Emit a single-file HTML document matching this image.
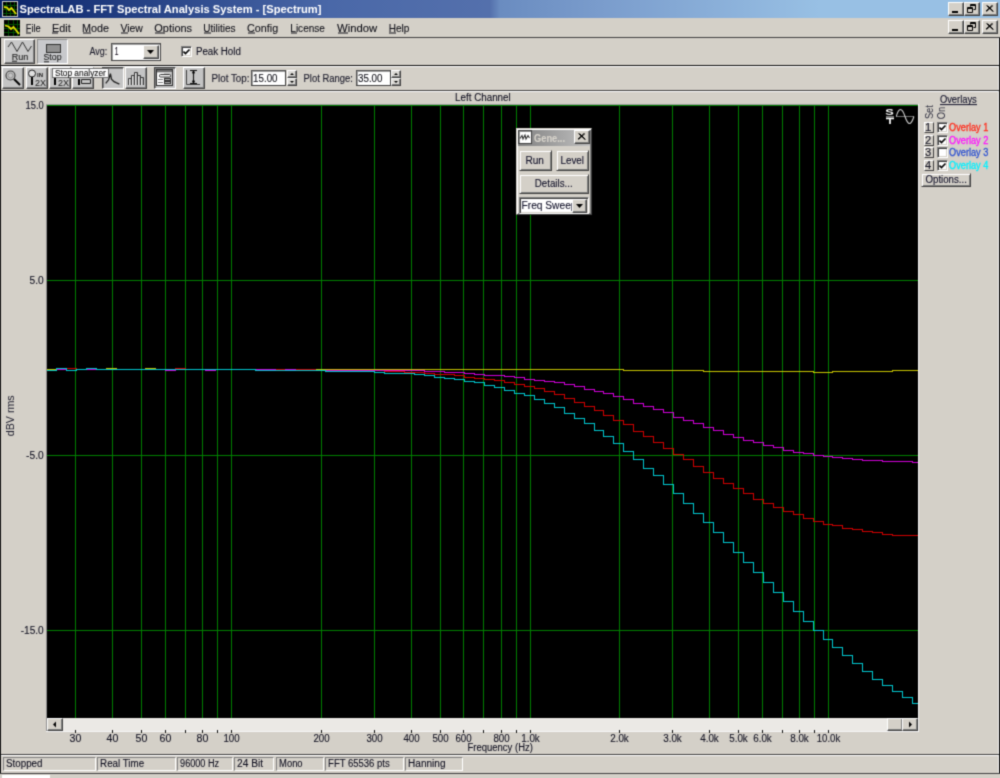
<!DOCTYPE html>
<html><head><meta charset="utf-8"><style>
html,body{margin:0;padding:0;}
body{width:1000px;height:778px;position:relative;overflow:hidden;background:#d4d0c8;font-family:"Liberation Sans",sans-serif;}
</style></head><body>
<svg width="0" height="0" style="position:absolute"><filter id="soft" x="0" y="0" width="100%" height="100%" color-interpolation-filters="sRGB"><feConvolveMatrix order="3" kernelMatrix="1 4 1 4 16 4 1 4 1" divisor="36" edgeMode="duplicate"/></filter></svg><div style="position:absolute;left:0;top:0;width:1000px;height:778px;overflow:hidden;filter:url(#soft)">
<div style="position:absolute;left:0;top:0;width:1000px;height:18px;background:linear-gradient(to right,#0a246a 0px,#4a68a8 330px,#5470ac 490px,#6a8cc0 500px,#7a9ccc 600px,#98c0e4 820px,#98c0e4 1000px);"></div>
<div style="position:absolute;left:2px;top:1px;width:16px;height:16px;box-sizing:border-box;background:#000;border:1px solid;border-color:#c8c8c8 #c8c8c8 #c8c8c8 #c8c8c8;"></div>
<svg style="position:absolute;left:3px;top:2px" width="14" height="14"><g stroke="#005000"><path d="M0 3.5H14M0 7.5H14M0 11.5H14M3.5 0V14M7.5 0V14M11.5 0V14"/></g><path d="M1 5 L4 5.5 L6 8 L8.5 6 L13 12" stroke="#e0e000" stroke-width="1.8" fill="none"/></svg>
<div style="position:absolute;left:948px;top:2px;width:16px;height:14px;box-sizing:border-box;background:#d4d0c8;border:1px solid;border-color:#fff #404040 #404040 #fff;box-shadow:inset -1px -1px #808080;"></div>
<div style="position:absolute;left:952px;top:11px;width:6px;height:2px;box-sizing:border-box;background:#000;"></div>
<div style="position:absolute;left:964px;top:2px;width:16px;height:14px;box-sizing:border-box;background:#d4d0c8;border:1px solid;border-color:#fff #404040 #404040 #fff;box-shadow:inset -1px -1px #808080;"></div>
<svg style="position:absolute;left:967px;top:4px" width="10" height="10"><path d="M3.5 0.5H8.5V5.5H6.5M3.5 0.5V2.5M3 1.5H9" stroke="#000" fill="none"/><path d="M0.5 3.5H5.5V8.5H0.5ZM0 4.5H6" stroke="#000" fill="none"/></svg>
<div style="position:absolute;left:982px;top:2px;width:16px;height:14px;box-sizing:border-box;background:#d4d0c8;border:1px solid;border-color:#fff #404040 #404040 #fff;box-shadow:inset -1px -1px #808080;"></div>
<svg style="position:absolute;left:986px;top:5px" width="8" height="7"><path d="M0.5 0.5L7 6.5M7 0.5L0.5 6.5M1.5 0.5L7.5 6.5M6 0.5L-0.5 6.5" stroke="#000" stroke-width="1"/></svg>
<div style="position:absolute;left:0px;top:18px;width:1000px;height:19px;box-sizing:border-box;background:#d4d0c8;"></div>
<div style="position:absolute;left:4px;top:20px;width:16px;height:16px;box-sizing:border-box;background:#000;"></div>
<svg style="position:absolute;left:4px;top:20px" width="16" height="16"><g stroke="#005000"><path d="M0 4.5H16M0 8.5H16M0 12.5H16M4.5 0V16M9.5 0V16M13.5 0V16"/></g><path d="M1 5.5 L4.5 6.5 L7 9 L9.5 7 L15 14" stroke="#e0e000" stroke-width="1.8" fill="none"/></svg>
<div style="position:absolute;left:948px;top:20px;width:16px;height:14px;box-sizing:border-box;background:#d4d0c8;border:1px solid;border-color:#fff #404040 #404040 #fff;box-shadow:inset -1px -1px #808080;"></div>
<div style="position:absolute;left:952px;top:29px;width:6px;height:2px;box-sizing:border-box;background:#000;"></div>
<div style="position:absolute;left:964px;top:20px;width:16px;height:14px;box-sizing:border-box;background:#d4d0c8;border:1px solid;border-color:#fff #404040 #404040 #fff;box-shadow:inset -1px -1px #808080;"></div>
<svg style="position:absolute;left:967px;top:22px" width="10" height="10"><path d="M3.5 0.5H8.5V5.5H6.5M3.5 0.5V2.5M3 1.5H9" stroke="#000" fill="none"/><path d="M0.5 3.5H5.5V8.5H0.5ZM0 4.5H6" stroke="#000" fill="none"/></svg>
<div style="position:absolute;left:982px;top:20px;width:16px;height:14px;box-sizing:border-box;background:#d4d0c8;border:1px solid;border-color:#fff #404040 #404040 #fff;box-shadow:inset -1px -1px #808080;"></div>
<svg style="position:absolute;left:986px;top:23px" width="8" height="7"><path d="M0.5 0.5L7 6.5M7 0.5L0.5 6.5M1.5 0.5L7.5 6.5M6 0.5L-0.5 6.5" stroke="#000" stroke-width="1"/></svg>
<div style="position:absolute;left:0px;top:37px;width:1000px;height:1px;background:#404040"></div>
<div style="position:absolute;left:0px;top:38px;width:1px;height:736px;background:#101010"></div>
<div style="position:absolute;left:999px;top:38px;width:1px;height:736px;background:#101010"></div>
<div style="position:absolute;left:998px;top:38px;width:1px;height:736px;background:#f0f0f0"></div>
<div style="position:absolute;left:4px;top:39px;width:31px;height:25px;box-sizing:border-box;background:#c8c8c8;border:1px solid;border-color:#fff #404040 #404040 #fff;box-shadow:inset -1px -1px #808080;"></div>
<svg style="position:absolute;left:4px;top:39px" width="31" height="25"><path d="M4 8 L7.5 3 L13 12.5 L18.5 3 L24 12.5 L27.5 7" stroke="#303030" stroke-width="1" fill="none"/></svg>
<div style="position:absolute;left:37px;top:39px;width:31px;height:25px;box-sizing:border-box;background:#c8c9cc;border:1px solid;border-color:#909090 #fff #fff #909090;"></div>
<div style="position:absolute;left:46px;top:44px;width:15px;height:9px;box-sizing:border-box;background:#909090;border:1px solid;border-color:#303030 #303030 #303030 #303030;"></div>
<div style="position:absolute;left:111px;top:43px;width:50px;height:18px;box-sizing:border-box;background:#fff;border:1px solid;border-color:#505050 #404040 #404040 #505050;box-shadow:inset 1px 1px #a0a0a0;"></div>
<div style="position:absolute;left:143px;top:45px;width:16px;height:14px;box-sizing:border-box;background:#d4d0c8;border:1px solid;border-color:#fff #404040 #404040 #fff;box-shadow:inset -1px -1px #808080;"></div>
<svg style="position:absolute;left:147px;top:50px" width="8" height="4"><path d="M0 0H7L3.5 4Z" fill="#000"/></svg>
<div style="position:absolute;left:181px;top:46px;width:11px;height:11px;box-sizing:border-box;background:#fff;border:1px solid;border-color:#808080 #fff #fff #808080;box-shadow:inset 1px 1px #404040, inset -1px -1px #d4d0c8;"></div>
<svg style="position:absolute;left:183px;top:48px" width="8" height="8"><path d="M0.5 3.5L2.5 5.5L6.5 1.5" stroke="#000" stroke-width="1.6" fill="none"/></svg>
<div style="position:absolute;left:1px;top:65px;width:998px;height:1px;background:#101010"></div>
<div style="position:absolute;left:1px;top:66px;width:998px;height:1px;background:#ffffff"></div>
<div style="position:absolute;left:2px;top:67px;width:22px;height:22px;box-sizing:border-box;background:#c4c4c4;border:1px solid;border-color:#fff #404040 #404040 #fff;box-shadow:inset -1px -1px #808080;"></div>
<div style="position:absolute;left:26px;top:67px;width:22px;height:22px;box-sizing:border-box;background:#c4c4c4;border:1px solid;border-color:#fff #404040 #404040 #fff;box-shadow:inset -1px -1px #808080;"></div>
<div style="position:absolute;left:49px;top:67px;width:22px;height:22px;box-sizing:border-box;background:#c4c4c4;border:1px solid;border-color:#fff #404040 #404040 #fff;box-shadow:inset -1px -1px #808080;"></div>
<div style="position:absolute;left:72px;top:67px;width:22px;height:22px;box-sizing:border-box;background:#c4c4c4;border:1px solid;border-color:#fff #404040 #404040 #fff;box-shadow:inset -1px -1px #808080;"></div>
<div style="position:absolute;left:102px;top:67px;width:22px;height:22px;box-sizing:border-box;background:#c4c4c4;border:1px solid;border-color:#404040 #fff #fff #404040;box-shadow:inset 1px 1px #808080;"></div>
<div style="position:absolute;left:125px;top:67px;width:22px;height:22px;box-sizing:border-box;background:#c4c4c4;border:1px solid;border-color:#fff #404040 #404040 #fff;box-shadow:inset -1px -1px #808080;"></div>
<div style="position:absolute;left:154px;top:67px;width:22px;height:22px;box-sizing:border-box;background:#c4c4c4;border:1px solid;border-color:#404040 #fff #fff #404040;box-shadow:inset 1px 1px #808080;"></div>
<div style="position:absolute;left:183px;top:67px;width:22px;height:22px;box-sizing:border-box;background:#c4c4c4;border:1px solid;border-color:#fff #404040 #404040 #fff;box-shadow:inset -1px -1px #808080;"></div>
<svg style="position:absolute;left:2px;top:67px" width="22" height="22"><circle cx="8.5" cy="8.5" r="4.5" stroke="#404040" fill="none" stroke-width="1.2"/><circle cx="8.5" cy="8.5" r="2.5" stroke="#909090" fill="none"/><path d="M12 12L18 18" stroke="#000" stroke-width="2"/></svg>
<svg style="position:absolute;left:26px;top:67px" width="22" height="22"><circle cx="6" cy="6.5" r="3.5" stroke="#202020" fill="#e0e0e0"/><path d="M6 10V18" stroke="#000" stroke-width="2"/><text x="11" y="10" font-size="6" font-family="Liberation Sans" font-weight="bold" fill="#202020">IN</text><text x="9" y="19" font-size="9" font-family="Liberation Sans" fill="#202020">2X</text></svg>
<svg style="position:absolute;left:49px;top:67px" width="22" height="22"><path d="M6 10V18" stroke="#000" stroke-width="2"/><text x="9" y="19" font-size="9" font-family="Liberation Sans" fill="#202020">2X</text></svg>
<svg style="position:absolute;left:72px;top:67px" width="22" height="22"><path d="M7 12V18" stroke="#000" stroke-width="2"/><path d="M9.5 12.5H18.5V16.5H9.5Z" stroke="#202020" fill="none"/></svg>
<svg style="position:absolute;left:102px;top:67px" width="22" height="22"><path d="M3.7 16.4 L6.6 12.8 L8.4 6.7 L9.5 12.1 L12 14.6 L14.1 15.7 L17.4 17.1" stroke="#202020" fill="none" stroke-width="1.3"/></svg>
<svg style="position:absolute;left:125px;top:67px" width="22" height="22"><path d="M3.5 18V11.5H6.5V18M6.5 18V8.5H9.5V18M9.5 18V5.5H12.5V18M12.5 18V8.5H15.5V18M15.5 18V10.5H18.5V18" stroke="#383838" fill="#a8a8a8" stroke-width="1"/><path d="M4.5 12V18M7.5 9V18M10.5 6V18M13.5 9V18M16.5 11V18" stroke="#e8e8e8"/></svg>
<svg style="position:absolute;left:154px;top:67px" width="22" height="22"><rect x="2.5" y="2.5" width="16" height="16" fill="#c8c8c8" stroke="#303030"/><rect x="3" y="3" width="15" height="2" fill="#707070"/><rect x="3" y="6" width="7" height="12" fill="#fff"/><rect x="5.5" y="7.5" width="11" height="2.5" rx="1" fill="#fff" stroke="#303030"/><rect x="10.5" y="11.5" width="6" height="2" fill="#b0b0b0" stroke="#303030"/><rect x="10.5" y="14.5" width="6" height="2" fill="#b0b0b0" stroke="#303030"/><path d="M4 12.5H9M4 15.5H9" stroke="#808080"/></svg>
<svg style="position:absolute;left:183px;top:67px" width="22" height="22"><path d="M3.5 3V17.5H17" stroke="#404040" fill="none"/><path d="M7 3.5H14M10.5 4V16M7 16.5H14" stroke="#101010" fill="none" stroke-width="1.1"/><circle cx="10.5" cy="5.5" r="1.3" fill="#000"/><circle cx="10.5" cy="14.5" r="1.3" fill="#000"/></svg>
<div style="position:absolute;left:52px;top:68px;width:57px;height:10px;box-sizing:border-box;background:#ffffff;border:1px solid;border-color:#707070 #707070 #707070 #707070;"></div>
<div style="position:absolute;left:251px;top:70px;width:35px;height:16px;box-sizing:border-box;background:#fff;border:1px solid;border-color:#505050 #404040 #404040 #505050;box-shadow:inset 1px 1px #a0a0a0;"></div>
<div style="position:absolute;left:287px;top:70px;width:10px;height:8px;box-sizing:border-box;background:#dcdad6;border:1px solid;border-color:#fff #404040 #404040 #fff;box-shadow:inset -1px -1px #808080;"></div>
<div style="position:absolute;left:287px;top:78px;width:10px;height:8px;box-sizing:border-box;background:#dcdad6;border:1px solid;border-color:#fff #404040 #404040 #fff;box-shadow:inset -1px -1px #808080;"></div>
<svg style="position:absolute;left:290px;top:73px" width="4" height="2"><path d="M0 2H4L2 0Z" fill="#000"/></svg>
<svg style="position:absolute;left:290px;top:81px" width="4" height="2"><path d="M0 0H4L2 2Z" fill="#000"/></svg>
<div style="position:absolute;left:356px;top:70px;width:35px;height:16px;box-sizing:border-box;background:#fff;border:1px solid;border-color:#505050 #404040 #404040 #505050;box-shadow:inset 1px 1px #a0a0a0;"></div>
<div style="position:absolute;left:391px;top:70px;width:10px;height:8px;box-sizing:border-box;background:#dcdad6;border:1px solid;border-color:#fff #404040 #404040 #fff;box-shadow:inset -1px -1px #808080;"></div>
<div style="position:absolute;left:391px;top:78px;width:10px;height:8px;box-sizing:border-box;background:#dcdad6;border:1px solid;border-color:#fff #404040 #404040 #fff;box-shadow:inset -1px -1px #808080;"></div>
<svg style="position:absolute;left:394px;top:73px" width="4" height="2"><path d="M0 2H4L2 0Z" fill="#000"/></svg>
<svg style="position:absolute;left:394px;top:81px" width="4" height="2"><path d="M0 0H4L2 2Z" fill="#000"/></svg>
<div style="position:absolute;left:1px;top:90px;width:998px;height:1px;background:#404040"></div>
<div style="position:absolute;left:1px;top:91px;width:997px;height:1px;background:#ffffff"></div>
<svg style="position:absolute;left:47px;top:105px" width="871" height="613" shape-rendering="crispEdges"><rect x="0" y="0" width="871" height="613" fill="#000"/><path d="M28.5 0V613 M65.5 0V613 M94.5 0V613 M118.5 0V613 M138.5 0V613 M155.5 0V613 M170.5 0V613 M184.5 0V613 M274.5 0V613 M327.5 0V613 M364.5 0V613 M393.5 0V613 M416.5 0V613 M436.5 0V613 M454.5 0V613 M469.5 0V613 M483.5 0V613 M572.5 0V613 M625.5 0V613 M662.5 0V613 M691.5 0V613 M715.5 0V613 M735.5 0V613 M752.5 0V613 M767.5 0V613 M781.5 0V613 M0 0.5H871 M0 175.5H871 M0 350.5H871 M0 525.5H871" stroke="#008000" stroke-width="1"/><path d="M0 264.5H9.5V263.5H19.5V265.5H29.5V264.5H39.5V263.5H49.5V264.5H59.5V263.5H69.5V264.5H79.5V264.5H88.5V264.5H98.5V263.5H108.5V264.5H118.5V264.5H128.5V264.5H138.5V264.5H148.5V264.5H158.5V264.5H168.5V264.5H178.5V264.5H188.5V264.5H198.5V264.5H208.5V265.5H218.5V265.5H228.5V265.5H238.5V265.5H248.5V265.5H258.5V265.5H268.5V264.5H278.5V264.5H288.5V264.5H298.5V264.5H308.5V264.5H318.5V264.5H327.5V264.5H337.5V264.5H347.5V264.5H357.5V264.5H367.5V264.5H377.5V264.5H387.5V264.5H397.5V264.5H407.5V264.5H417.5V264.5H427.5V264.5H437.5V264.5H447.5V264.5H457.5V264.5H467.5V264.5H477.5V264.5H487.5V264.5H497.5V264.5H507.5V264.5H517.5V264.5H527.5V264.5H537.5V264.5H547.5V264.5H556.5V264.5H566.5V264.5H576.5V265.5H586.5V265.5H596.5V265.5H606.5V265.5H616.5V265.5H626.5V265.5H636.5V265.5H646.5V265.5H656.5V266.5H666.5V266.5H676.5V266.5H686.5V266.5H696.5V266.5H706.5V266.5H716.5V266.5H726.5V266.5H736.5V266.5H746.5V266.5H756.5V266.5H766.5V267.5H776.5V267.5H785.5V266.5H795.5V266.5H805.5V266.5H815.5V266.5H825.5V266.5H835.5V266.5H845.5V265.5H855.5V265.5H865.5V265.5H871" stroke="#c8c400" stroke-width="1" fill="none"/><path d="M0 265.5H9.5V263.5H19.5V263.5H29.5V264.5H39.5V263.5H49.5V264.5H59.5V264.5H69.5V264.5H79.5V264.5H88.5V264.5H98.5V264.5H108.5V264.5H118.5V264.5H128.5V263.5H138.5V264.5H148.5V264.5H158.5V264.5H168.5V264.5H178.5V264.5H188.5V264.5H198.5V264.5H208.5V265.5H218.5V265.5H228.5V264.5H238.5V265.5H248.5V264.5H258.5V264.5H268.5V265.5H278.5V265.5H288.5V265.5H298.5V265.5H308.5V265.5H318.5V265.5H327.5V265.5H337.5V266.5H347.5V266.5H357.5V267.5H367.5V267.5H377.5V268.5H387.5V269.5H397.5V269.5H407.5V270.5H417.5V272.5H427.5V273.5H437.5V274.5H447.5V275.5H457.5V277.5H467.5V279.5H477.5V281.5H487.5V283.5H497.5V286.5H507.5V289.5H517.5V293.5H527.5V297.5H537.5V301.5H547.5V305.5H556.5V310.5H566.5V315.5H576.5V319.5H586.5V326.5H596.5V331.5H606.5V337.5H616.5V343.5H626.5V349.5H636.5V354.5H646.5V361.5H656.5V367.5H666.5V373.5H676.5V378.5H686.5V383.5H696.5V388.5H706.5V394.5H716.5V398.5H726.5V402.5H736.5V406.5H746.5V409.5H756.5V413.5H766.5V416.5H776.5V419.5H785.5V420.5H795.5V423.5H805.5V424.5H815.5V426.5H825.5V427.5H835.5V429.5H845.5V430.5H855.5V430.5H865.5V430.5H871" stroke="#d00000" stroke-width="1" fill="none"/><path d="M0 265.5H9.5V264.5H19.5V265.5H29.5V264.5H39.5V264.5H49.5V264.5H59.5V264.5H69.5V264.5H79.5V264.5H88.5V264.5H98.5V264.5H108.5V264.5H118.5V265.5H128.5V264.5H138.5V264.5H148.5V264.5H158.5V265.5H168.5V264.5H178.5V264.5H188.5V264.5H198.5V264.5H208.5V264.5H218.5V264.5H228.5V265.5H238.5V264.5H248.5V265.5H258.5V265.5H268.5V265.5H278.5V265.5H288.5V265.5H298.5V265.5H308.5V265.5H318.5V265.5H327.5V265.5H337.5V265.5H347.5V265.5H357.5V265.5H367.5V265.5H377.5V266.5H387.5V266.5H397.5V267.5H407.5V267.5H417.5V268.5H427.5V269.5H437.5V270.5H447.5V270.5H457.5V271.5H467.5V272.5H477.5V274.5H487.5V275.5H497.5V276.5H507.5V277.5H517.5V279.5H527.5V281.5H537.5V284.5H547.5V286.5H556.5V288.5H566.5V291.5H576.5V294.5H586.5V298.5H596.5V301.5H606.5V304.5H616.5V307.5H626.5V312.5H636.5V315.5H646.5V318.5H656.5V322.5H666.5V325.5H676.5V329.5H686.5V332.5H696.5V335.5H706.5V337.5H716.5V340.5H726.5V342.5H736.5V345.5H746.5V347.5H756.5V348.5H766.5V350.5H776.5V351.5H785.5V352.5H795.5V353.5H805.5V354.5H815.5V355.5H825.5V355.5H835.5V356.5H845.5V356.5H855.5V356.5H865.5V357.5H871" stroke="#d000d8" stroke-width="1" fill="none"/><path d="M0 265.5H9.5V263.5H19.5V265.5H29.5V264.5H39.5V263.5H49.5V264.5H59.5V264.5H69.5V264.5H79.5V264.5H88.5V264.5H98.5V264.5H108.5V264.5H118.5V264.5H128.5V264.5H138.5V264.5H148.5V264.5H158.5V264.5H168.5V264.5H178.5V264.5H188.5V264.5H198.5V264.5H208.5V265.5H218.5V265.5H228.5V265.5H238.5V265.5H248.5V265.5H258.5V265.5H268.5V265.5H278.5V266.5H288.5V266.5H298.5V266.5H308.5V266.5H318.5V266.5H327.5V267.5H337.5V268.5H347.5V268.5H357.5V268.5H367.5V269.5H377.5V270.5H387.5V272.5H397.5V273.5H407.5V274.5H417.5V276.5H427.5V277.5H437.5V280.5H447.5V282.5H457.5V285.5H467.5V288.5H477.5V290.5H487.5V294.5H497.5V298.5H507.5V302.5H517.5V308.5H527.5V313.5H537.5V318.5H547.5V325.5H556.5V331.5H566.5V338.5H576.5V346.5H586.5V354.5H596.5V363.5H606.5V370.5H616.5V379.5H626.5V388.5H636.5V398.5H646.5V408.5H656.5V417.5H666.5V427.5H676.5V437.5H686.5V447.5H696.5V457.5H706.5V467.5H716.5V477.5H726.5V487.5H736.5V496.5H746.5V506.5H756.5V516.5H766.5V525.5H776.5V534.5H785.5V542.5H795.5V550.5H805.5V558.5H815.5V566.5H825.5V574.5H835.5V580.5H845.5V586.5H855.5V592.5H865.5V598.5H871" stroke="#00c8d0" stroke-width="1" fill="none"/></svg>
<svg style="position:absolute;left:884px;top:108px" width="32" height="17"><text x="5.5" y="7.4" font-size="8.6" font-weight="bold" font-family="Liberation Sans" fill="#fff" text-anchor="middle" textLength="8.5" lengthAdjust="spacingAndGlyphs">S</text><path d="M2 8.5H10" stroke="#808080"/><path d="M2 10.3H10M6 10V16" stroke="#fff" stroke-width="1.7" fill="none"/><path d="M12 8.5H30" stroke="#707070"/><path d="M12.3 8.5 C13.5 4 15 1.5 16.5 1.5 C18 1.5 19.5 4 21 8.5 C22.5 13 24 15.5 25.5 15.5 C27 15.5 28.5 13 29.9 8.5" stroke="#d0d0d0" fill="none" stroke-width="1.1"/></svg>
<div style="position:absolute;left:46px;top:104px;width:1px;height:628px;background:#909090"></div>
<div style="position:absolute;left:46px;top:104px;width:873px;height:1px;background:#a0a0a0"></div>
<div style="position:absolute;left:918px;top:104px;width:1px;height:628px;background:#f4f4f4"></div>
<div style="position:absolute;left:46px;top:731px;width:873px;height:1px;background:#f4f4f4"></div>
<div style="position:absolute;left:47px;top:718px;width:871px;height:13px;box-sizing:border-box;background:#ebe9e5;"></div>
<div style="position:absolute;left:47px;top:718px;width:16px;height:13px;box-sizing:border-box;background:#d4d0c8;border:1px solid;border-color:#fff #404040 #404040 #fff;box-shadow:inset -1px -1px #808080;"></div>
<svg style="position:absolute;left:47px;top:718px" width="16" height="13"><path d="M9 3.5V9.5L6 6.5Z" fill="#000"/></svg>
<div style="position:absolute;left:887px;top:718px;width:16px;height:13px;box-sizing:border-box;background:#d4d0c8;border:1px solid;border-color:#fff #404040 #404040 #fff;box-shadow:inset -1px -1px #808080;"></div>
<div style="position:absolute;left:902px;top:718px;width:16px;height:13px;box-sizing:border-box;background:#d4d0c8;border:1px solid;border-color:#fff #404040 #404040 #fff;box-shadow:inset -1px -1px #808080;"></div>
<svg style="position:absolute;left:902px;top:718px" width="16" height="13"><path d="M7 3.5V9.5L10 6.5Z" fill="#000"/></svg>
<div style="position:absolute;left:75px;top:730px;width:1px;height:3px;box-sizing:border-box;background:#101010;"></div>
<div style="position:absolute;left:112px;top:730px;width:1px;height:3px;box-sizing:border-box;background:#101010;"></div>
<div style="position:absolute;left:141px;top:730px;width:1px;height:3px;box-sizing:border-box;background:#101010;"></div>
<div style="position:absolute;left:165px;top:730px;width:1px;height:3px;box-sizing:border-box;background:#101010;"></div>
<div style="position:absolute;left:185px;top:730px;width:1px;height:3px;box-sizing:border-box;background:#101010;"></div>
<div style="position:absolute;left:202px;top:730px;width:1px;height:3px;box-sizing:border-box;background:#101010;"></div>
<div style="position:absolute;left:217px;top:730px;width:1px;height:3px;box-sizing:border-box;background:#101010;"></div>
<div style="position:absolute;left:231px;top:730px;width:1px;height:3px;box-sizing:border-box;background:#101010;"></div>
<div style="position:absolute;left:321px;top:730px;width:1px;height:3px;box-sizing:border-box;background:#101010;"></div>
<div style="position:absolute;left:374px;top:730px;width:1px;height:3px;box-sizing:border-box;background:#101010;"></div>
<div style="position:absolute;left:411px;top:730px;width:1px;height:3px;box-sizing:border-box;background:#101010;"></div>
<div style="position:absolute;left:440px;top:730px;width:1px;height:3px;box-sizing:border-box;background:#101010;"></div>
<div style="position:absolute;left:463px;top:730px;width:1px;height:3px;box-sizing:border-box;background:#101010;"></div>
<div style="position:absolute;left:483px;top:730px;width:1px;height:3px;box-sizing:border-box;background:#101010;"></div>
<div style="position:absolute;left:501px;top:730px;width:1px;height:3px;box-sizing:border-box;background:#101010;"></div>
<div style="position:absolute;left:516px;top:730px;width:1px;height:3px;box-sizing:border-box;background:#101010;"></div>
<div style="position:absolute;left:530px;top:730px;width:1px;height:3px;box-sizing:border-box;background:#101010;"></div>
<div style="position:absolute;left:619px;top:730px;width:1px;height:3px;box-sizing:border-box;background:#101010;"></div>
<div style="position:absolute;left:672px;top:730px;width:1px;height:3px;box-sizing:border-box;background:#101010;"></div>
<div style="position:absolute;left:709px;top:730px;width:1px;height:3px;box-sizing:border-box;background:#101010;"></div>
<div style="position:absolute;left:738px;top:730px;width:1px;height:3px;box-sizing:border-box;background:#101010;"></div>
<div style="position:absolute;left:762px;top:730px;width:1px;height:3px;box-sizing:border-box;background:#101010;"></div>
<div style="position:absolute;left:782px;top:730px;width:1px;height:3px;box-sizing:border-box;background:#101010;"></div>
<div style="position:absolute;left:799px;top:730px;width:1px;height:3px;box-sizing:border-box;background:#101010;"></div>
<div style="position:absolute;left:814px;top:730px;width:1px;height:3px;box-sizing:border-box;background:#101010;"></div>
<div style="position:absolute;left:828px;top:730px;width:1px;height:3px;box-sizing:border-box;background:#101010;"></div>
<div style="position:absolute;left:924px;top:122px;width:10px;height:11px;box-sizing:border-box;background:#d4d0c8;border:1px solid;border-color:#fff #404040 #404040 #fff;"></div>
<div style="position:absolute;left:937px;top:122px;width:11px;height:11px;box-sizing:border-box;background:#fff;border:1px solid;border-color:#808080 #fff #fff #808080;box-shadow:inset 1px 1px #404040, inset -1px -1px #d4d0c8;"></div>
<svg style="position:absolute;left:939px;top:124px" width="8" height="8"><path d="M0.5 3.5L2.5 5.5L6.5 1.5" stroke="#000" stroke-width="1.6" fill="none"/></svg>
<div style="position:absolute;left:924px;top:135px;width:10px;height:11px;box-sizing:border-box;background:#d4d0c8;border:1px solid;border-color:#fff #404040 #404040 #fff;"></div>
<div style="position:absolute;left:937px;top:135px;width:11px;height:11px;box-sizing:border-box;background:#fff;border:1px solid;border-color:#808080 #fff #fff #808080;box-shadow:inset 1px 1px #404040, inset -1px -1px #d4d0c8;"></div>
<svg style="position:absolute;left:939px;top:137px" width="8" height="8"><path d="M0.5 3.5L2.5 5.5L6.5 1.5" stroke="#000" stroke-width="1.6" fill="none"/></svg>
<div style="position:absolute;left:924px;top:147px;width:10px;height:11px;box-sizing:border-box;background:#d4d0c8;border:1px solid;border-color:#fff #404040 #404040 #fff;"></div>
<div style="position:absolute;left:937px;top:147px;width:11px;height:11px;box-sizing:border-box;background:#fff;border:1px solid;border-color:#808080 #fff #fff #808080;box-shadow:inset 1px 1px #404040, inset -1px -1px #d4d0c8;"></div>
<div style="position:absolute;left:924px;top:160px;width:10px;height:11px;box-sizing:border-box;background:#d4d0c8;border:1px solid;border-color:#fff #404040 #404040 #fff;"></div>
<div style="position:absolute;left:937px;top:160px;width:11px;height:11px;box-sizing:border-box;background:#fff;border:1px solid;border-color:#808080 #fff #fff #808080;box-shadow:inset 1px 1px #404040, inset -1px -1px #d4d0c8;"></div>
<svg style="position:absolute;left:939px;top:162px" width="8" height="8"><path d="M0.5 3.5L2.5 5.5L6.5 1.5" stroke="#000" stroke-width="1.6" fill="none"/></svg>
<div style="position:absolute;left:921px;top:173px;width:50px;height:14px;box-sizing:border-box;background:#d4d0c8;border:1px solid;border-color:#d4d0c8 #404040 #404040 #d4d0c8;box-shadow:inset 1px 1px #fff, inset -1px -1px #808080;"></div>
<div style="position:absolute;left:516px;top:128px;width:76px;height:87px;box-sizing:border-box;background:#d4d0c8;border:1px solid;border-color:#d4d0c8 #404040 #404040 #d4d0c8;box-shadow:inset 1px 1px #fff, inset -1px -1px #808080;"></div>
<div style="position:absolute;left:518px;top:130px;width:72px;height:16px;background:linear-gradient(to right,#808080,#c0c0c0)"></div>
<div style="position:absolute;left:518px;top:130px;width:14px;height:14px;box-sizing:border-box;background:#fff;border:1px solid;border-color:#404040 #404040 #404040 #404040;box-shadow:inset 1px 1px #909090;"></div>
<svg style="position:absolute;left:519px;top:131px" width="12" height="12"><path d="M1 7.5L3 4.5L4 8L6 4L7 8L9 4.5L10.5 7" stroke="#303030" stroke-width="1.1" fill="none"/></svg>
<div style="position:absolute;left:574px;top:130px;width:16px;height:14px;box-sizing:border-box;background:#d4d0c8;border:1px solid;border-color:#fff #404040 #404040 #fff;box-shadow:inset -1px -1px #808080;"></div>
<svg style="position:absolute;left:578px;top:133px" width="8" height="7"><path d="M0.5 0.5L7 6.5M7 0.5L0.5 6.5M1.5 0.5L7.5 6.5M6 0.5L-0.5 6.5" stroke="#000" stroke-width="1"/></svg>
<div style="position:absolute;left:519px;top:150px;width:33px;height:21px;box-sizing:border-box;background:#d4d0c8;border:1px solid;border-color:#d4d0c8 #404040 #404040 #d4d0c8;box-shadow:inset 1px 1px #fff, inset -1px -1px #808080;"></div>
<div style="position:absolute;left:556px;top:150px;width:33px;height:21px;box-sizing:border-box;background:#d4d0c8;border:1px solid;border-color:#d4d0c8 #404040 #404040 #d4d0c8;box-shadow:inset 1px 1px #fff, inset -1px -1px #808080;"></div>
<div style="position:absolute;left:519px;top:174px;width:70px;height:20px;box-sizing:border-box;background:#d4d0c8;border:1px solid;border-color:#d4d0c8 #404040 #404040 #d4d0c8;box-shadow:inset 1px 1px #fff, inset -1px -1px #808080;"></div>
<div style="position:absolute;left:519px;top:197px;width:70px;height:17px;box-sizing:border-box;background:#fff;border:1px solid;border-color:#808080 #fff #fff #808080;box-shadow:inset 1px 1px #404040, inset -1px -1px #d4d0c8;"></div>
<div style="position:absolute;left:521px;top:199px;width:51px;height:13px;overflow:hidden"><svg width="80" height="13" style="position:absolute;left:0;top:0"><text x="0.5" y="10.4" font-size="10" font-family="Liberation Sans" fill="#101028" stroke="#101028" stroke-width="0.1" textLength="55" lengthAdjust="spacingAndGlyphs">Freq Sweep</text></svg></div>
<div style="position:absolute;left:572px;top:199px;width:15px;height:14px;box-sizing:border-box;background:#d4d0c8;border:1px solid;border-color:#fff #404040 #404040 #fff;box-shadow:inset -1px -1px #808080;"></div>
<svg style="position:absolute;left:576px;top:204px" width="8" height="4"><path d="M0 0H7L3.5 4Z" fill="#000"/></svg>
<div style="position:absolute;left:1px;top:754px;width:998px;height:1px;background:#404040"></div>
<div style="position:absolute;left:1px;top:755px;width:998px;height:1px;background:#ffffff"></div>
<div style="position:absolute;left:3px;top:757px;width:93px;height:14px;box-sizing:border-box;background:#d4d0c8;border:1px solid;border-color:#808080 #fff #fff #808080;"></div>
<div style="position:absolute;left:97px;top:757px;width:79px;height:14px;box-sizing:border-box;background:#d4d0c8;border:1px solid;border-color:#808080 #fff #fff #808080;"></div>
<div style="position:absolute;left:177px;top:757px;width:56px;height:14px;box-sizing:border-box;background:#d4d0c8;border:1px solid;border-color:#808080 #fff #fff #808080;"></div>
<div style="position:absolute;left:234px;top:757px;width:40px;height:14px;box-sizing:border-box;background:#d4d0c8;border:1px solid;border-color:#808080 #fff #fff #808080;"></div>
<div style="position:absolute;left:276px;top:757px;width:48px;height:14px;box-sizing:border-box;background:#d4d0c8;border:1px solid;border-color:#808080 #fff #fff #808080;"></div>
<div style="position:absolute;left:325px;top:757px;width:79px;height:14px;box-sizing:border-box;background:#d4d0c8;border:1px solid;border-color:#808080 #fff #fff #808080;"></div>
<div style="position:absolute;left:405px;top:757px;width:58px;height:14px;box-sizing:border-box;background:#d4d0c8;border:1px solid;border-color:#808080 #fff #fff #808080;"></div>
<div style="position:absolute;left:0px;top:773px;width:1000px;height:1px;background:#404040"></div>
<div style="position:absolute;left:0px;top:774px;width:1000px;height:4px;box-sizing:border-box;background:#d4d0c8;"></div>
<div style="position:absolute;left:2px;top:775px;width:48px;height:3px;box-sizing:border-box;background:#fff;"></div>
<svg style="position:absolute;left:0;top:0" width="1000" height="778" font-family="Liberation Sans"><text x="19.5" y="13" font-size="11.5" fill="#fff" stroke="#fff" stroke-width="0" font-weight="bold" text-anchor="start" textLength="302.0" lengthAdjust="spacingAndGlyphs" >SpectraLAB - FFT Spectral Analysis System - [Spectrum]</text><text x="25.8" y="31.5" font-size="11" fill="#101018" stroke="#101018" stroke-width="0.1" font-weight="normal" text-anchor="start" textLength="15.0" lengthAdjust="spacingAndGlyphs" >File</text><rect x="26" y="32.5" width="5" height="1" fill="#101018"/><text x="52.0" y="31.5" font-size="11" fill="#101018" stroke="#101018" stroke-width="0.1" font-weight="normal" text-anchor="start" textLength="18.7" lengthAdjust="spacingAndGlyphs" >Edit</text><rect x="52" y="32.5" width="6" height="1" fill="#101018"/><text x="82.1" y="31.5" font-size="11" fill="#101018" stroke="#101018" stroke-width="0.1" font-weight="normal" text-anchor="start" textLength="27.0" lengthAdjust="spacingAndGlyphs" >Mode</text><rect x="83" y="32.5" width="8" height="1" fill="#101018"/><text x="120.5" y="31.5" font-size="11" fill="#101018" stroke="#101018" stroke-width="0.1" font-weight="normal" text-anchor="start" textLength="22.4" lengthAdjust="spacingAndGlyphs" >View</text><rect x="121" y="32.5" width="7" height="1" fill="#101018"/><text x="154.3" y="31.5" font-size="11" fill="#101018" stroke="#101018" stroke-width="0.1" font-weight="normal" text-anchor="start" textLength="37.8" lengthAdjust="spacingAndGlyphs" >Options</text><rect x="155" y="32.5" width="8" height="1" fill="#101018"/><text x="203.2" y="31.5" font-size="11" fill="#101018" stroke="#101018" stroke-width="0.1" font-weight="normal" text-anchor="start" textLength="32.3" lengthAdjust="spacingAndGlyphs" >Utilities</text><rect x="204" y="32.5" width="7" height="1" fill="#101018"/><text x="247.1" y="31.5" font-size="11" fill="#101018" stroke="#101018" stroke-width="0.1" font-weight="normal" text-anchor="start" textLength="31.0" lengthAdjust="spacingAndGlyphs" >Config</text><rect x="248" y="32.5" width="7" height="1" fill="#101018"/><text x="290.3" y="31.5" font-size="11" fill="#101018" stroke="#101018" stroke-width="0.1" font-weight="normal" text-anchor="start" textLength="34.6" lengthAdjust="spacingAndGlyphs" >License</text><rect x="291" y="32.5" width="6" height="1" fill="#101018"/><text x="337.1" y="31.5" font-size="11" fill="#101018" stroke="#101018" stroke-width="0.1" font-weight="normal" text-anchor="start" textLength="40.1" lengthAdjust="spacingAndGlyphs" >Window</text><rect x="338" y="32.5" width="10" height="1" fill="#101018"/><text x="388.7" y="31.5" font-size="11" fill="#101018" stroke="#101018" stroke-width="0.1" font-weight="normal" text-anchor="start" textLength="20.7" lengthAdjust="spacingAndGlyphs" >Help</text><rect x="389" y="32.5" width="7" height="1" fill="#101018"/><text x="11.7" y="59.7" font-size="9" fill="#202020" stroke="#202020" stroke-width="0.1" font-weight="normal" text-anchor="start" textLength="16.6" lengthAdjust="spacingAndGlyphs" >Run</text><rect x="12" y="60.7" width="5" height="1" fill="#202020"/><text x="43.5" y="60.3" font-size="9" fill="#202020" stroke="#202020" stroke-width="0.1" font-weight="normal" text-anchor="start" textLength="18.1" lengthAdjust="spacingAndGlyphs" >Stop</text><rect x="44" y="61.3" width="5" height="1" fill="#202020"/><text x="89.5" y="54.8" font-size="10" fill="#181828" stroke="#181828" stroke-width="0.1" font-weight="normal" text-anchor="start" textLength="17.8" lengthAdjust="spacingAndGlyphs" >Avg:</text><text x="114.8" y="54.8" font-size="10" fill="#100818" stroke="#100818" stroke-width="0.1" font-weight="normal" text-anchor="start" textLength="3.7" lengthAdjust="spacingAndGlyphs" >1</text><text x="195.9" y="54.8" font-size="10" fill="#101020" stroke="#101020" stroke-width="0.1" font-weight="normal" text-anchor="start" textLength="45.0" lengthAdjust="spacingAndGlyphs" >Peak Hold</text><text x="54.9" y="76.2" font-size="9" fill="#101010" stroke="#101010" stroke-width="0.1" font-weight="normal" text-anchor="start" textLength="51.0" lengthAdjust="spacingAndGlyphs" >Stop analyzer</text><text x="211.5" y="82" font-size="10" fill="#181828" stroke="#181828" stroke-width="0.1" font-weight="normal" text-anchor="start" textLength="38.0" lengthAdjust="spacingAndGlyphs" >Plot Top:</text><text x="253.1" y="82" font-size="10" fill="#101018" stroke="#101018" stroke-width="0.1" font-weight="normal" text-anchor="start" textLength="24.4" lengthAdjust="spacingAndGlyphs" >15.00</text><text x="303.5" y="82" font-size="10" fill="#181828" stroke="#181828" stroke-width="0.1" font-weight="normal" text-anchor="start" textLength="49.4" lengthAdjust="spacingAndGlyphs" >Plot Range:</text><text x="358.0" y="82" font-size="10" fill="#101018" stroke="#101018" stroke-width="0.1" font-weight="normal" text-anchor="start" textLength="24.5" lengthAdjust="spacingAndGlyphs" >35.00</text><text x="455.1" y="100.8" font-size="10" fill="#101020" stroke="#101020" stroke-width="0.1" font-weight="normal" text-anchor="start" textLength="55.6" lengthAdjust="spacingAndGlyphs" >Left Channel</text><text x="25.5" y="109.3" font-size="10" fill="#101020" stroke="#101020" stroke-width="0.1" font-weight="normal" text-anchor="start" textLength="18.200000000000003" lengthAdjust="spacingAndGlyphs" >15.0</text><text x="29.5" y="284.3" font-size="10" fill="#101020" stroke="#101020" stroke-width="0.1" font-weight="normal" text-anchor="start" textLength="14.200000000000003" lengthAdjust="spacingAndGlyphs" >5.0</text><text x="26.1" y="459.3" font-size="10" fill="#101020" stroke="#101020" stroke-width="0.1" font-weight="normal" text-anchor="start" textLength="17.6" lengthAdjust="spacingAndGlyphs" >-5.0</text><text x="20.7" y="634.3" font-size="10" fill="#101020" stroke="#101020" stroke-width="0.1" font-weight="normal" text-anchor="start" textLength="23.000000000000004" lengthAdjust="spacingAndGlyphs" >-15.0</text><text x="0" y="0" font-size="10" fill="#202030" text-anchor="middle" textLength="41" lengthAdjust="spacingAndGlyphs" transform="translate(14.3 415.8) rotate(-90)">dBV rms</text><text x="75.5" y="742" font-size="10" fill="#101020" stroke="#101020" stroke-width="0.1" font-weight="normal" text-anchor="middle" textLength="11.8" lengthAdjust="spacingAndGlyphs" >30</text><text x="112.5" y="742" font-size="10" fill="#101020" stroke="#101020" stroke-width="0.1" font-weight="normal" text-anchor="middle" textLength="11.8" lengthAdjust="spacingAndGlyphs" >40</text><text x="141.5" y="742" font-size="10" fill="#101020" stroke="#101020" stroke-width="0.1" font-weight="normal" text-anchor="middle" textLength="11.8" lengthAdjust="spacingAndGlyphs" >50</text><text x="165.5" y="742" font-size="10" fill="#101020" stroke="#101020" stroke-width="0.1" font-weight="normal" text-anchor="middle" textLength="11.8" lengthAdjust="spacingAndGlyphs" >60</text><text x="202.5" y="742" font-size="10" fill="#101020" stroke="#101020" stroke-width="0.1" font-weight="normal" text-anchor="middle" textLength="11.8" lengthAdjust="spacingAndGlyphs" >80</text><text x="231.5" y="742" font-size="10" fill="#101020" stroke="#101020" stroke-width="0.1" font-weight="normal" text-anchor="middle" textLength="16.2" lengthAdjust="spacingAndGlyphs" >100</text><text x="321.5" y="742" font-size="10" fill="#101020" stroke="#101020" stroke-width="0.1" font-weight="normal" text-anchor="middle" textLength="16.2" lengthAdjust="spacingAndGlyphs" >200</text><text x="374.5" y="742" font-size="10" fill="#101020" stroke="#101020" stroke-width="0.1" font-weight="normal" text-anchor="middle" textLength="16.2" lengthAdjust="spacingAndGlyphs" >300</text><text x="411.5" y="742" font-size="10" fill="#101020" stroke="#101020" stroke-width="0.1" font-weight="normal" text-anchor="middle" textLength="16.2" lengthAdjust="spacingAndGlyphs" >400</text><text x="440.5" y="742" font-size="10" fill="#101020" stroke="#101020" stroke-width="0.1" font-weight="normal" text-anchor="middle" textLength="16.2" lengthAdjust="spacingAndGlyphs" >500</text><text x="463.5" y="742" font-size="10" fill="#101020" stroke="#101020" stroke-width="0.1" font-weight="normal" text-anchor="middle" textLength="16.2" lengthAdjust="spacingAndGlyphs" >600</text><text x="501.5" y="742" font-size="10" fill="#101020" stroke="#101020" stroke-width="0.1" font-weight="normal" text-anchor="middle" textLength="16.2" lengthAdjust="spacingAndGlyphs" >800</text><text x="530.5" y="742" font-size="10" fill="#101020" stroke="#101020" stroke-width="0.1" font-weight="normal" text-anchor="middle" textLength="18.6" lengthAdjust="spacingAndGlyphs" >1.0k</text><text x="619.5" y="742" font-size="10" fill="#101020" stroke="#101020" stroke-width="0.1" font-weight="normal" text-anchor="middle" textLength="18.6" lengthAdjust="spacingAndGlyphs" >2.0k</text><text x="672.5" y="742" font-size="10" fill="#101020" stroke="#101020" stroke-width="0.1" font-weight="normal" text-anchor="middle" textLength="18.6" lengthAdjust="spacingAndGlyphs" >3.0k</text><text x="709.5" y="742" font-size="10" fill="#101020" stroke="#101020" stroke-width="0.1" font-weight="normal" text-anchor="middle" textLength="18.6" lengthAdjust="spacingAndGlyphs" >4.0k</text><text x="738.5" y="742" font-size="10" fill="#101020" stroke="#101020" stroke-width="0.1" font-weight="normal" text-anchor="middle" textLength="18.6" lengthAdjust="spacingAndGlyphs" >5.0k</text><text x="762.5" y="742" font-size="10" fill="#101020" stroke="#101020" stroke-width="0.1" font-weight="normal" text-anchor="middle" textLength="18.6" lengthAdjust="spacingAndGlyphs" >6.0k</text><text x="799.5" y="742" font-size="10" fill="#101020" stroke="#101020" stroke-width="0.1" font-weight="normal" text-anchor="middle" textLength="18.6" lengthAdjust="spacingAndGlyphs" >8.0k</text><text x="828.5" y="742" font-size="10" fill="#101020" stroke="#101020" stroke-width="0.1" font-weight="normal" text-anchor="middle" textLength="23.4" lengthAdjust="spacingAndGlyphs" >10.0k</text><text x="467.5" y="751" font-size="10" fill="#101020" stroke="#101020" stroke-width="0.1" font-weight="normal" text-anchor="start" textLength="65.4" lengthAdjust="spacingAndGlyphs" >Frequency (Hz)</text><text x="939.9" y="103.1" font-size="10" fill="#101028" stroke="#101028" stroke-width="0.1" font-weight="normal" text-anchor="start" textLength="36.9" lengthAdjust="spacingAndGlyphs" >Overlays</text><rect x="940" y="104.1" width="37" height="1" fill="#101028"/><text x="0" y="0" font-size="10" fill="#303040" text-anchor="middle" textLength="14" lengthAdjust="spacingAndGlyphs" transform="translate(933 112.1) rotate(-90)">Set</text><text x="0" y="0" font-size="10" fill="#303040" text-anchor="middle" textLength="12.5" lengthAdjust="spacingAndGlyphs" transform="translate(944.8 113) rotate(-90)">On</text><text x="925.1" y="130.5" font-size="10" fill="#181828" stroke="#181828" stroke-width="0.1" font-weight="normal" text-anchor="start" textLength="6.2" lengthAdjust="spacingAndGlyphs" >1</text><text x="949.1" y="131" font-size="10" fill="#ff2a1a" stroke="#ff2a1a" stroke-width="0.3" font-weight="normal" text-anchor="start" textLength="39.2" lengthAdjust="spacingAndGlyphs" >Overlay 1</text><text x="925.1" y="143.5" font-size="10" fill="#181828" stroke="#181828" stroke-width="0.1" font-weight="normal" text-anchor="start" textLength="6.2" lengthAdjust="spacingAndGlyphs" >2</text><text x="949.1" y="144" font-size="10" fill="#ff10ff" stroke="#ff10ff" stroke-width="0.3" font-weight="normal" text-anchor="start" textLength="39.2" lengthAdjust="spacingAndGlyphs" >Overlay 2</text><text x="925.1" y="155.5" font-size="10" fill="#181828" stroke="#181828" stroke-width="0.1" font-weight="normal" text-anchor="start" textLength="6.2" lengthAdjust="spacingAndGlyphs" >3</text><text x="949.1" y="156" font-size="10" fill="#2c50d0" stroke="#2c50d0" stroke-width="0.3" font-weight="normal" text-anchor="start" textLength="39.2" lengthAdjust="spacingAndGlyphs" >Overlay 3</text><text x="925.1" y="168.5" font-size="10" fill="#181828" stroke="#181828" stroke-width="0.1" font-weight="normal" text-anchor="start" textLength="6.2" lengthAdjust="spacingAndGlyphs" >4</text><text x="949.1" y="169" font-size="10" fill="#00f0ff" stroke="#00f0ff" stroke-width="0.3" font-weight="normal" text-anchor="start" textLength="39.2" lengthAdjust="spacingAndGlyphs" >Overlay 4</text><text x="925.5" y="182.8" font-size="10" fill="#101028" stroke="#101028" stroke-width="0.1" font-weight="normal" text-anchor="start" textLength="41.4" lengthAdjust="spacingAndGlyphs" >Options...</text><text x="534.0" y="141.5" font-size="11" fill="#d8d4cc" stroke="#d8d4cc" stroke-width="0.1" font-weight="bold" text-anchor="start" textLength="31.0" lengthAdjust="spacingAndGlyphs" >Gene...</text><text x="525.4" y="163.5" font-size="10" fill="#101028" stroke="#101028" stroke-width="0.1" font-weight="normal" text-anchor="start" textLength="18.5" lengthAdjust="spacingAndGlyphs" >Run</text><text x="560.5" y="163.5" font-size="10" fill="#101028" stroke="#101028" stroke-width="0.1" font-weight="normal" text-anchor="start" textLength="23.4" lengthAdjust="spacingAndGlyphs" >Level</text><text x="534.8" y="186.9" font-size="10" fill="#101028" stroke="#101028" stroke-width="0.1" font-weight="normal" text-anchor="start" textLength="37.9" lengthAdjust="spacingAndGlyphs" >Details...</text><text x="6.1" y="766.6" font-size="10" fill="#101020" stroke="#101020" stroke-width="0.1" font-weight="normal" text-anchor="start" textLength="36.4" lengthAdjust="spacingAndGlyphs" >Stopped</text><text x="100.1" y="766.6" font-size="10" fill="#101020" stroke="#101020" stroke-width="0.1" font-weight="normal" text-anchor="start" textLength="44.0" lengthAdjust="spacingAndGlyphs" >Real Time</text><text x="180.1" y="766.6" font-size="10" fill="#101020" stroke="#101020" stroke-width="0.1" font-weight="normal" text-anchor="start" textLength="39.0" lengthAdjust="spacingAndGlyphs" >96000 Hz</text><text x="237.1" y="766.6" font-size="10" fill="#101020" stroke="#101020" stroke-width="0.1" font-weight="normal" text-anchor="start" textLength="26.0" lengthAdjust="spacingAndGlyphs" >24 Bit</text><text x="279.1" y="766.6" font-size="10" fill="#101020" stroke="#101020" stroke-width="0.1" font-weight="normal" text-anchor="start" textLength="23.5" lengthAdjust="spacingAndGlyphs" >Mono</text><text x="328.1" y="766.6" font-size="10" fill="#101020" stroke="#101020" stroke-width="0.1" font-weight="normal" text-anchor="start" textLength="61.6" lengthAdjust="spacingAndGlyphs" >FFT 65536 pts</text><text x="408.1" y="766.6" font-size="10" fill="#101020" stroke="#101020" stroke-width="0.1" font-weight="normal" text-anchor="start" textLength="37.4" lengthAdjust="spacingAndGlyphs" >Hanning</text></svg>
</div>
</body></html>
